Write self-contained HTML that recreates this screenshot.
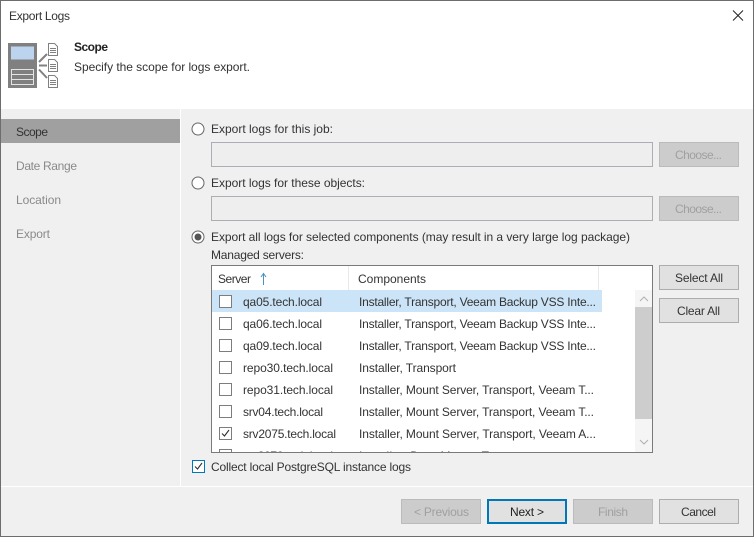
<!DOCTYPE html>
<html>
<head>
<meta charset="utf-8">
<title>Export Logs</title>
<style>
html,body{margin:0;padding:0;width:754px;height:537px;overflow:hidden;background:#fff}
svg{display:block}
text{font-family:"Liberation Sans",sans-serif;font-size:12px;fill:#333}
.d{fill:#a0a0a0}
.s{fill:#8a8a8a}
</style>
</head>
<body>
<svg width="754" height="537" viewBox="0 0 754 537" xmlns="http://www.w3.org/2000/svg">
<defs><clipPath id="c"><rect x="212" y="290" width="423" height="162"/></clipPath></defs>
<rect width="754" height="537" fill="#fff"/>
<rect y="109" width="754" height="428" fill="#f0f0f0"/>
<rect x="180" y="109" width="1" height="377" fill="#fff"/>
<rect y="486" width="754" height="1" fill="#fff"/>
<rect x="1" y="119" width="179" height="24" fill="#a0a0a0"/>
<rect x=".5" y=".5" width="753" height="536" fill="none" stroke="#6d6d6d"/>

<text x="9" y="20" textLength="61">Export Logs</text>
<path d="M733 10.500L743 20.500M743 10.500L733 20.500" stroke="#222" fill="none"/>

<!-- header icon -->
<rect x="8" y="43" width="29" height="45" fill="#808080"/>
<rect x="11" y="46.500" width="23" height="13" fill="#bcd4ee"/>
<path d="M11.500 69.500h22v15h-22zM11.500 74.500h22M11.500 79.500h22" fill="#808080" stroke="#e4e4e4"/>
<path d="M39 62L47 54M39 65.500H47M39 69.500L47 78" stroke="#808080" stroke-width="2" fill="none"/>
<g fill="#fff" stroke="#808080">
<path d="M48.500 43.500h6l3 3v9h-9z"/><path d="M48.500 59.500h6l3 3v9h-9z"/><path d="M48.500 75.500h6l3 3v9h-9z"/>
<path d="M50 48.500h6M50 50.500h6M50 52.500h6M50 64.500h6M50 66.500h6M50 68.500h6M50 80.500h6M50 82.500h6M50 84.500h6" fill="none"/>
</g>
<text x="74" y="51" textLength="34" font-weight="700" style="font-weight:700;fill:#222">Scope</text>
<text x="74" y="71" textLength="176">Specify the scope for logs export.</text>

<!-- sidebar -->
<text x="16" y="136" textLength="32">Scope</text>
<text x="16" y="170" textLength="61" class="s">Date Range</text>
<text x="16" y="204" textLength="45" class="s">Location</text>
<text x="16" y="238" textLength="34" class="s">Export</text>

<!-- radios -->
<g fill="#fff" stroke="#666">
<circle cx="198" cy="129" r="6"/><circle cx="198" cy="183" r="6"/><circle cx="198" cy="237" r="6"/>
</g>
<circle cx="198" cy="237" r="3.500" fill="#555"/>
<text x="211" y="133" textLength="122">Export logs for this job:</text>
<text x="211" y="187" textLength="154">Export logs for these objects:</text>
<text x="211" y="241" textLength="419">Export all logs for selected components (may result in a very large log package)</text>
<text x="211" y="259" textLength="93">Managed servers:</text>

<!-- inputs -->
<rect x="211.500" y="142.500" width="441" height="24" fill="#eee" stroke="#adadb5"/>
<rect x="211.500" y="196.500" width="441" height="24" fill="#eee" stroke="#adadb5"/>

<!-- buttons -->
<g fill="#ccc" stroke="#bbb">
<rect x="659.500" y="142.500" width="79" height="24"/>
<rect x="659.500" y="196.500" width="79" height="24"/>
<rect x="401.500" y="499.500" width="79" height="24"/>
<rect x="573.500" y="499.500" width="79" height="24"/>
</g>
<g fill="#e1e1e1" stroke="#adadad">
<rect x="659.500" y="265.500" width="79" height="24"/>
<rect x="659.500" y="298.500" width="79" height="24"/>
<rect x="659.500" y="499.500" width="79" height="24"/>
</g>
<rect x="488" y="500" width="78" height="23" fill="#e1e1e1" stroke="#0078b8" stroke-width="2"/>
<text x="675" y="159" textLength="47" class="d">Choose...</text>
<text x="675" y="213" textLength="47" class="d">Choose...</text>
<text x="675" y="282" textLength="48">Select All</text>
<text x="677" y="315" textLength="43">Clear All</text>
<text x="414" y="516" textLength="55" class="d">&lt; Previous</text>
<text x="510" y="516" textLength="34" style="fill:#222">Next &gt;</text>
<text x="598" y="516" textLength="30" class="d">Finish</text>
<text x="681" y="516" textLength="35">Cancel</text>

<!-- table -->
<rect x="211.500" y="265.500" width="441" height="187" fill="#fff" stroke="#7a7a7a"/>
<rect x="348" y="266" width="1" height="24" fill="#e8e8e8"/>
<rect x="598" y="266" width="1" height="24" fill="#e8e8e8"/>
<text x="218" y="283" textLength="33">Server</text>
<path d="M263.500 285V274M261 277L263.500 273.500L266 277" stroke="#4a90c0" fill="none"/>
<text x="358" y="283" textLength="68">Components</text>
<rect x="212" y="290" width="390" height="22" fill="#cce4f7"/>

<g clip-path="url(#c)">
<g fill="#fff" stroke="#7d7d7d">
<rect x="219.500" y="295.500" width="12" height="12"/>
<rect x="219.500" y="317.500" width="12" height="12"/>
<rect x="219.500" y="339.500" width="12" height="12"/>
<rect x="219.500" y="361.500" width="12" height="12"/>
<rect x="219.500" y="383.500" width="12" height="12"/>
<rect x="219.500" y="405.500" width="12" height="12"/>
<rect x="219.500" y="427.500" width="12" height="12"/>
<rect x="219.500" y="449.500" width="12" height="12"/>
</g>
<path d="M222 433.500L224.500 436L229 430" stroke="#333" stroke-width="1.100" fill="none"/>
<text x="243" y="306" textLength="79">qa05.tech.local</text>
<text x="243" y="328" textLength="79">qa06.tech.local</text>
<text x="243" y="350" textLength="79">qa09.tech.local</text>
<text x="243" y="372" textLength="90">repo30.tech.local</text>
<text x="243" y="394" textLength="90">repo31.tech.local</text>
<text x="243" y="416" textLength="80">srv04.tech.local</text>
<text x="243" y="438" textLength="93">srv2075.tech.local</text>
<text x="243" y="460" textLength="90">srv2076.tech.local</text>
<text x="359" y="306" textLength="237">Installer, Transport, Veeam Backup VSS Inte...</text>
<text x="359" y="328" textLength="237">Installer, Transport, Veeam Backup VSS Inte...</text>
<text x="359" y="350" textLength="237">Installer, Transport, Veeam Backup VSS Inte...</text>
<text x="359" y="372" textLength="97">Installer, Transport</text>
<text x="359" y="394" textLength="235">Installer, Mount Server, Transport, Veeam T...</text>
<text x="359" y="416" textLength="235">Installer, Mount Server, Transport, Veeam T...</text>
<text x="359" y="438" textLength="237">Installer, Mount Server, Transport, Veeam A...</text>
<text x="359" y="460" textLength="130">Installer, Data Mover, T</text>
</g>

<!-- scrollbar -->
<rect x="635" y="290" width="17" height="162" fill="#f5f5f5"/>
<rect x="635" y="307" width="17" height="112" fill="#cdcdcd"/>
<path d="M640 301L644 297L648 301M640 440L644 444L648 440" stroke="#b0b0b0" fill="none"/>

<!-- collect -->
<rect x="192.500" y="460.500" width="12" height="12" fill="#fff" stroke="#0078b8"/>
<path d="M195 466.500L197.500 469L202 463" stroke="#333" stroke-width="1.100" fill="none"/>
<text x="211" y="471" textLength="200">Collect local PostgreSQL instance logs</text>
</svg>
</body>
</html>
